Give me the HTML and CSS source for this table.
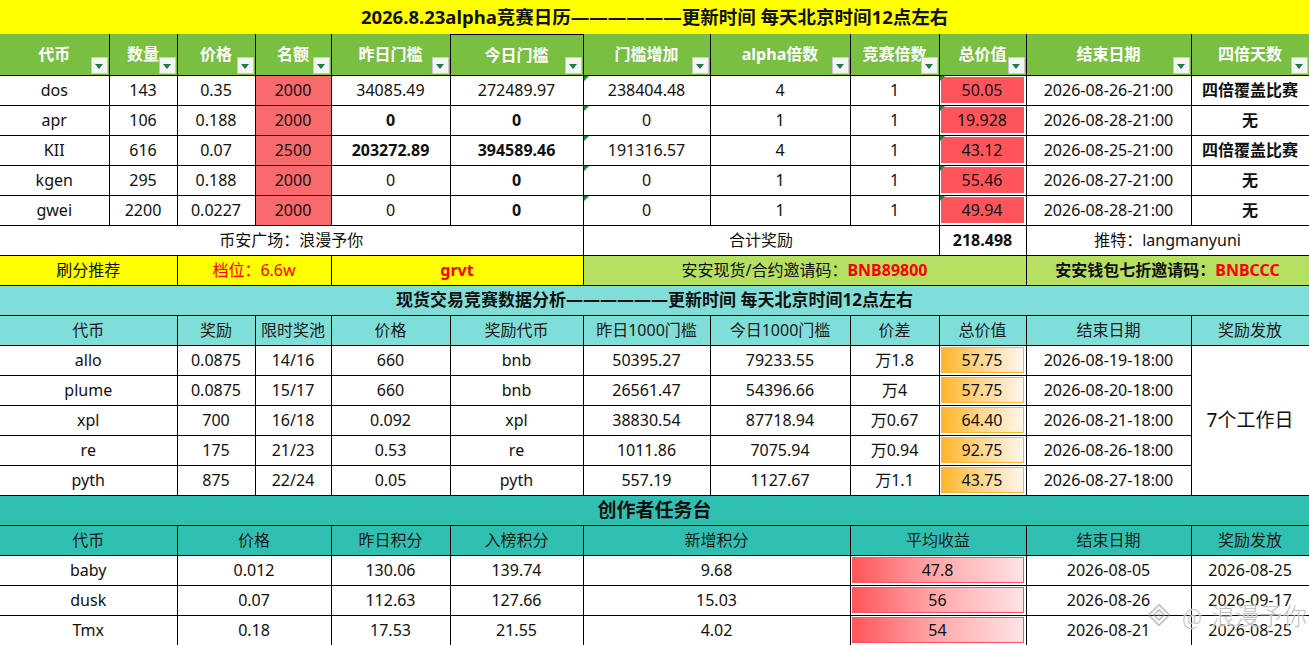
FILE: index.html
```html
<!DOCTYPE html>
<html lang="zh-CN">
<head>
<meta charset="utf-8">
<title>2026.8.23alpha竞赛日历</title>
<link rel="stylesheet" href="styles.css">
</head>
<body>
<div class="sheet">
<table class="grid">
<colgroup>
<col class="c1"><col class="c2"><col class="c3"><col class="c4"><col class="c5"><col class="c6">
<col class="c7"><col class="c8"><col class="c9"><col class="c10"><col class="c11"><col class="c12">
</colgroup>
<tbody>
<tr class="r34"><td colspan="12" class="t1">2026.8.23alpha竞赛日历——————更新时间 每天北京时间12点左右</td></tr>
<tr class="r41 hdr">
<th>代币<span class="dd"></span></th>
<th>数量<span class="dd"></span></th>
<th>价格<span class="dd"></span></th>
<th>名额<span class="dd"></span></th>
<th>昨日门槛<span class="dd"></span></th>
<th class="sel">今日门槛<span class="dd"></span></th>
<th>门槛增加<span class="dd"></span></th>
<th>alpha倍数<span class="dd"></span></th>
<th>竞赛倍数<span class="dd"></span></th>
<th>总价值<span class="dd"></span></th>
<th>结束日期<span class="dd"></span></th>
<th>四倍天数<span class="dd"></span></th>
</tr>
<tr class="r30"><td>dos</td><td>143</td><td>0.35</td><td class="quota">2000</td><td>34085.49</td><td>272489.97</td><td class="err">238404.48</td><td>4</td><td>1</td><td class="err barcell"><div class="bar solid">50.05</div></td><td>2026-08-26-21:00</td><td class="b">四倍覆盖比赛</td></tr>
<tr class="r30"><td>apr</td><td>106</td><td>0.188</td><td class="quota">2000</td><td class="b">0</td><td class="b">0</td><td class="err">0</td><td>1</td><td>1</td><td class="err barcell"><div class="bar solid">19.928</div></td><td>2026-08-28-21:00</td><td class="b">无</td></tr>
<tr class="r30"><td>KII</td><td>616</td><td>0.07</td><td class="quota">2500</td><td class="b">203272.89</td><td class="b">394589.46</td><td class="err">191316.57</td><td>4</td><td>1</td><td class="err barcell"><div class="bar solid">43.12</div></td><td>2026-08-25-21:00</td><td class="b">四倍覆盖比赛</td></tr>
<tr class="r30"><td>kgen</td><td>295</td><td>0.188</td><td class="quota">2000</td><td>0</td><td class="b">0</td><td class="err">0</td><td>1</td><td>1</td><td class="err barcell"><div class="bar solid">55.46</div></td><td>2026-08-27-21:00</td><td class="b">无</td></tr>
<tr class="r30"><td>gwei</td><td>2200</td><td>0.0227</td><td class="quota">2000</td><td>0</td><td class="b">0</td><td class="err">0</td><td>1</td><td>1</td><td class="err barcell"><div class="bar solid">49.94</div></td><td>2026-08-28-21:00</td><td class="b">无</td></tr>
<tr class="r30"><td colspan="6">币安广场：浪漫予你</td><td colspan="3">合计奖励</td><td class="b">218.498</td><td colspan="2">推特：langmanyuni</td></tr>
<tr class="r30 promo"><td colspan="2" class="yl">刷分推荐</td><td colspan="2" class="yl red">档位：6.6w</td><td colspan="2" class="yl red b">grvt</td><td colspan="4" class="lg">安安现货/合约邀请码：<span class="red b">BNB89800</span></td><td colspan="2" class="lg b">安安钱包七折邀请码：<span class="red">BNBCCC</span></td></tr>
<tr class="r30"><td colspan="12" class="t2">现货交易竞赛数据分析——————更新时间 每天北京时间12点左右</td></tr>
<tr class="r30 h2"><td colspan="2">代币</td><td>奖励</td><td>限时奖池</td><td>价格</td><td>奖励代币</td><td>昨日1000门槛</td><td>今日1000门槛</td><td>价差</td><td>总价值</td><td>结束日期</td><td>奖励发放</td></tr>
<tr class="r30"><td colspan="2">allo</td><td>0.0875</td><td>14/16</td><td>660</td><td>bnb</td><td>50395.27</td><td>79233.55</td><td>万1.8</td><td class="barcell"><div class="bar orange">57.75</div></td><td>2026-08-19-18:00</td><td rowspan="5" class="pay">7个工作日</td></tr>
<tr class="r30"><td colspan="2">plume</td><td>0.0875</td><td>15/17</td><td>660</td><td>bnb</td><td>26561.47</td><td>54396.66</td><td>万4</td><td class="barcell"><div class="bar orange">57.75</div></td><td>2026-08-20-18:00</td></tr>
<tr class="r30"><td colspan="2">xpl</td><td>700</td><td>16/18</td><td>0.092</td><td>xpl</td><td>38830.54</td><td>87718.94</td><td>万0.67</td><td class="barcell"><div class="bar orange">64.40</div></td><td>2026-08-21-18:00</td></tr>
<tr class="r30"><td colspan="2">re</td><td>175</td><td>21/23</td><td>0.53</td><td>re</td><td>1011.86</td><td>7075.94</td><td>万0.94</td><td class="barcell"><div class="bar orange">92.75</div></td><td>2026-08-26-18:00</td></tr>
<tr class="r30"><td colspan="2">pyth</td><td>875</td><td>22/24</td><td>0.05</td><td>pyth</td><td>557.19</td><td>1127.67</td><td>万1.1</td><td class="barcell"><div class="bar orange">43.75</div></td><td>2026-08-27-18:00</td></tr>
<tr class="r30"><td colspan="12" class="t3">创作者任务台</td></tr>
<tr class="r30 h3"><td colspan="2">代币</td><td colspan="2">价格</td><td>昨日积分</td><td>入榜积分</td><td colspan="2">新增积分</td><td colspan="2">平均收益</td><td>结束日期</td><td>奖励发放</td></tr>
<tr class="r30"><td colspan="2">baby</td><td colspan="2">0.012</td><td>130.06</td><td>139.74</td><td colspan="2">9.68</td><td colspan="2" class="barcell"><div class="bar pink">47.8</div></td><td>2026-08-05</td><td>2026-08-25</td></tr>
<tr class="r30"><td colspan="2">dusk</td><td colspan="2">0.07</td><td>112.63</td><td>127.66</td><td colspan="2">15.03</td><td colspan="2" class="barcell"><div class="bar pink">56</div></td><td>2026-08-26</td><td>2026-09-17</td></tr>
<tr class="r30"><td colspan="2">Tmx</td><td colspan="2">0.18</td><td>17.53</td><td>21.55</td><td colspan="2">4.02</td><td colspan="2" class="barcell"><div class="bar pink">54</div></td><td>2026-08-21</td><td>2026-08-25</td></tr>
</tbody>
</table>
<div class="watermark">
<svg class="wm-logo" viewBox="0 0 28 28" width="24" height="24">
<path d="M14 2 L26 14 L14 26 L2 14 Z" fill="none" stroke="currentColor" stroke-width="2"/>
<path d="M14 8 L20 14 L14 20 L8 14 Z" fill="none" stroke="currentColor" stroke-width="2"/>
<path d="M14 12 L16 14 L14 16 L12 14 Z" fill="currentColor"/>
</svg>
<span class="wm-at">@</span>
<span class="wm-name">浪漫予你</span>
</div>
</div>
</body>
</html>
```

FILE: styles.css
```css
html, body {
  margin: 0;
  padding: 0;
  background: #ffffff;
}
body {
  width: 1309px;
  height: 645px;
  overflow: hidden;
  font-family: "Noto Sans", "Noto Sans CJK SC", sans-serif;
  color: #111;
}
.sheet {
  position: relative;
  width: 1309px;
  height: 645px;
  overflow: hidden;
}
.grid {
  border-collapse: collapse;
  table-layout: fixed;
  width: 1309px;
  font-size: 16px;
}
.c1 { width: 109px; }
.c2 { width: 68px; }
.c3 { width: 78px; }
.c4 { width: 76px; }
.c5 { width: 119px; }
.c6 { width: 133px; }
.c7 { width: 127px; }
.c8 { width: 140px; }
.c9 { width: 89px; }
.c10 { width: 87px; }
.c11 { width: 165px; }
.c12 { width: 118px; }

.grid td, .grid th {
  border: 1px solid #000;
  padding: 0;
  text-align: center;
  vertical-align: middle;
  white-space: nowrap;
  overflow: hidden;
  font-weight: normal;
  line-height: 20px;
}
.grid tr > :first-child { border-left: none; }

.r34 { height: 34px; }
.r41 { height: 41px; }
.r30 { height: 30px; }

.t1 {
  background: #ffff00;
  font-weight: bold !important;
  font-size: 18.5px;
  border: none !important;
}
.hdr th {
  position: relative;
  background: #78bf42;
  color: #ffffff;
  font-weight: bold;
  border-top: none;
}
.hdr th.sel { border-top: 1px solid #000; }
.dd {
  position: absolute;
  right: 1px;
  bottom: 1px;
  width: 15px;
  height: 15px;
  background: #f4f4f4;
  border: 1px solid #c9c9c9;
}
.dd::after {
  content: "";
  position: absolute;
  left: 3px;
  top: 6px;
  border-left: 4.5px solid transparent;
  border-right: 4.5px solid transparent;
  border-top: 5px solid #1f7a48;
}
.quota { background: #f86a6b; }
.b { font-weight: bold !important; }
.red { color: #ff0000; }

.err { position: relative; }
.err::before {
  content: "";
  position: absolute;
  left: 0;
  top: 0;
  z-index: 2;
  border-top: 5px solid #1c8a3a;
  border-right: 5px solid transparent;
}
.barcell { padding: 0; }
.bar {
  box-sizing: border-box;
  height: 26px;
  line-height: 24px;
  margin: 0 2px 0 1px;
}
.bar.solid {
  background: #ff555a;
  line-height: 26px;
}
.bar.orange {
  background: linear-gradient(to right, #ffb628 0%, #ffd58a 45%, #fff6ea 100%);
  border: 1px solid #ffb628;
}
.bar.pink {
  background: linear-gradient(to right, #ff555a 0%, #ffa3a6 45%, #ffe3e4 100%);
  border: 1px solid #ff555a;
}

.yl { background: #ffff00; }
.lg { background: #b5e061; }

.t2 {
  background: #80ded8;
  font-weight: bold !important;
  font-size: 17px;
  border-left: none !important;
  border-right: none !important;
}
.h2 td { background: #80ded8; color: #1a1a1a; }
.t3 {
  background: #30c0b2;
  font-weight: bold !important;
  font-size: 19px;
  border-left: none !important;
  border-right: none !important;
}
.h3 td { background: #30c0b2; color: #1a1a1a; }
.pay { font-size: 19px; }

.watermark {
  position: absolute;
  left: 1147px;
  top: 602px;
  display: flex;
  align-items: center;
  gap: 3px;
  color: rgba(140, 140, 140, 0.55);
  font-family: "Noto Sans CJK SC", sans-serif;
  font-weight: 300;
  text-shadow: 0 0 2px #ffffff, 0 0 1px #ffffff;
  pointer-events: none;
}
.wm-logo { display: block; }
.wm-at { font-size: 22px; line-height: 26px; margin: 0 6px 0 8px; }
.wm-name { font-size: 24px; line-height: 26px; }
```
